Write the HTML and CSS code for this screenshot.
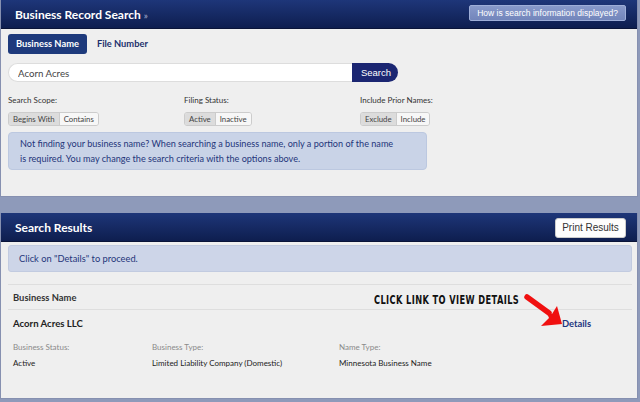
FILE: index.html
```html
<!DOCTYPE html>
<html lang="en">
<head>
    <meta charset="UTF-8">
    <title>Business Record Search</title>
    <link rel="stylesheet" href="styles.css">
</head>
<body>
<div class="page">
    <div class="panel search-panel">
        <div class="panel-head">
            <h1>Business Record Search <span class="crumb">&raquo;</span></h1>
            <button class="help-btn">How is search information displayed?</button>
        </div>
        <div class="panel-body">
            <div class="tabs">
                <span class="tab active">Business Name</span>
                <span class="tab">File Number</span>
            </div>
            <div class="search-row">
                <input class="search-input" type="text" value="Acorn Acres">
                <button class="search-btn">Search</button>
            </div>
            <div class="options">
                <div class="option">
                    <div class="opt-label">Search Scope:</div>
                    <div class="toggle"><span class="on">Begins With</span><span>Contains</span></div>
                </div>
                <div class="option">
                    <div class="opt-label">Filing Status:</div>
                    <div class="toggle"><span class="on">Active</span><span>Inactive</span></div>
                </div>
                <div class="option">
                    <div class="opt-label">Include Prior Names:</div>
                    <div class="toggle"><span class="on">Exclude</span><span>Include</span></div>
                </div>
            </div>
            <div class="hint">
                Not finding your business name? When searching a business name, only a portion of the name<br>
                is required. You may change the search criteria with the options above.
            </div>
        </div>
    </div>

    <div class="panel results-panel">
        <div class="panel-head">
            <h2>Search Results</h2>
            <button class="print-btn">Print Results</button>
        </div>
        <div class="panel-body">
            <div class="notice">Click on "Details" to proceed.</div>
            <div class="col-head">Business Name</div>
            <div class="result">
                <div class="result-top">
                    <span class="result-name">Acorn Acres LLC</span>
                    <a href="#" class="details">Details</a>
                </div>
                <div class="fields">
                    <div class="field">
                        <div class="f-label">Business Status:</div>
                        <div class="f-value">Active</div>
                    </div>
                    <div class="field wide">
                        <div class="f-label">Business Type:</div>
                        <div class="f-value">Limited Liability Company (Domestic)</div>
                    </div>
                    <div class="field">
                        <div class="f-label">Name Type:</div>
                        <div class="f-value">Minnesota Business Name</div>
                    </div>
                </div>
            </div>
            <!-- annotation over the result rows -->
            <div class="callout">CLICK LINK TO VIEW DETAILS</div>
            <svg class="arrow" width="46" height="36" viewBox="0 0 46 36">
                <path d="M3 3 L25 19" stroke="#f01010" stroke-width="5.5" stroke-linecap="round"/>
                <polygon points="17,32 38,30 33,12 28,20 22,17 25,24" fill="#f01010"/>
            </svg>
        </div>
    </div>
</div>
</body>
</html>
```

FILE: styles.css
```css
body {
    margin: 0;
    background: #8e9aba;
    font-family: Lato, "Open Sans", sans-serif;
}

.page {
    width: 638px;
}

/* panels */
.panel {
    background: #efefef;
    border: 1px solid #8690b0;
    border-top: none;
}
.results-panel {
    margin-top: 16px;
    height: 185px;
    position: relative;
}
.panel-head {
    height: 28px;
    display: flex;
    align-items: center;
    justify-content: space-between;
    padding: 0 11px 0 14px;
    background: linear-gradient(#1e3679, #0e1e4f);
    border-bottom: 1px solid #0a1438;
}
.panel-head h1,
.panel-head h2 {
    margin: 0;
    color: #fff;
    font-size: 12px;
    font-weight: bold;
}
.crumb {
    color: #8d98bd;
    font-size: 9px;
}
.help-btn {
    font-family: "Liberation Sans", Arial, sans-serif;
    font-size: 8.5px;
    color: #fff;
    background: linear-gradient(#8799ca, #7285bb);
    border: 1px solid #9eaed8;
    border-radius: 2px;
    padding: 0 7px;
    height: 16px;
    margin-top: -2px;
}
.print-btn {
    font-family: "Liberation Sans", Arial, sans-serif;
    font-size: 10px;
    color: #333;
    background: #fdfdfd;
    border: 1px solid #ccc;
    border-radius: 3px;
    height: 20px;
    width: 71px;
    padding: 0;
    margin-top: 1px;
}

.panel-body {
    padding: 5px 7px 26px 7px;
}

/* tabs */
.tabs {
    display: flex;
    align-items: center;
    gap: 2px;
}
.tab {
    font-size: 9.3px;
    font-weight: bold;
    color: #1c2f6c;
    padding: 0 8px;
    height: 20px;
    line-height: 20px;
}
.tab.active {
    background: #1e3a7c;
    color: #fff;
    border-radius: 3px;
}

/* search box */
.search-row {
    display: flex;
    margin-top: 9px;
}
.search-input {
    width: 344px;
    height: 19px;
    box-sizing: border-box;
    border: 1px solid #ddd;
    border-right: none;
    border-radius: 10px 0 0 10px;
    padding: 0 0 0 9px;
    font-family: Lato, sans-serif;
    font-size: 9.7px;
    color: #444;
    background: #fff;
}
.search-btn {
    width: 46px;
    height: 19px;
    border: none;
    border-radius: 0 10px 10px 0;
    background: #1b2672;
    color: #fff;
    font-family: "Liberation Sans", Arial, sans-serif;
    font-size: 9.5px;
    padding: 0 0 0 2px;
}

/* option toggles */
.options {
    display: flex;
    margin-top: 13px;
}
.option {
    width: 176px;
}
.opt-label {
    font-size: 8px;
    color: #333;
    height: 11px;
    line-height: 11px;
}
.toggle {
    display: inline-flex;
    border: 1px solid #ccc;
    border-radius: 3px;
    overflow: hidden;
}
.toggle span {
    font-size: 7.8px;
    color: #444;
    background: #f7f7f7;
    padding: 0 4px;
    height: 12px;
    line-height: 12px;
}
.toggle span.on {
    background: #dcdcdc;
    border-right: 1px solid #ccc;
}

.hint {
    width: 396px;
    margin-top: 6px;
    background: #c9d3e7;
    border: 1px solid #bcc8e0;
    border-radius: 4px;
    padding: 3px 10px 3px 11px;
    font-size: 9.1px;
    line-height: 15px;
    color: #24357a;
}

/* results */
.results-panel .panel-body {
    padding: 3px 5px 0 7px;
}
.notice {
    background: #cdd5e8;
    border: 1px solid #c2cbe0;
    border-radius: 3px;
    height: 25px;
    line-height: 25px;
    padding-left: 10px;
    font-size: 9.3px;
    color: #24357a;
}
.col-head {
    margin-top: 12px;
    border-top: 1px solid #dedede;
    border-bottom: 1px solid #dedede;
    padding: 0 0 0 5px;
    height: 24px;
    line-height: 25px;
    font-size: 9.4px;
    font-weight: bold;
    color: #333;
}
.result {
    padding: 0 0 0 5px;
}
.result-top {
    display: flex;
    justify-content: space-between;
    align-items: center;
    height: 25px;
    padding-top: 1px;
}
.result-name {
    font-size: 9.6px;
    font-weight: bold;
    color: #222;
}
.details {
    font-size: 9.4px;
    font-weight: bold;
    color: #1d3680;
    text-decoration: none;
    margin-right: 41px;
}
.fields {
    display: flex;
    margin-top: 5px;
}
.field {
    width: 139px;
}
.field.wide {
    width: 187px;
}
.f-label {
    font-size: 8px;
    color: #8a8a8a;
    line-height: 12px;
}
.f-value {
    margin-top: 4px;
    font-size: 8px;
    line-height: 12px;
    color: #222;
}

/* annotation overlay */
.callout {
    position: absolute;
    left: 373px;
    top: 79px;
    font-family: "DejaVu Sans", sans-serif;
    font-weight: bold;
    font-size: 12.5px;
    letter-spacing: 0.6px;
    color: #111;
    transform: scaleX(0.66);
    transform-origin: left center;
    white-space: nowrap;
}
.arrow {
    position: absolute;
    left: 523px;
    top: 81px;
}
```
